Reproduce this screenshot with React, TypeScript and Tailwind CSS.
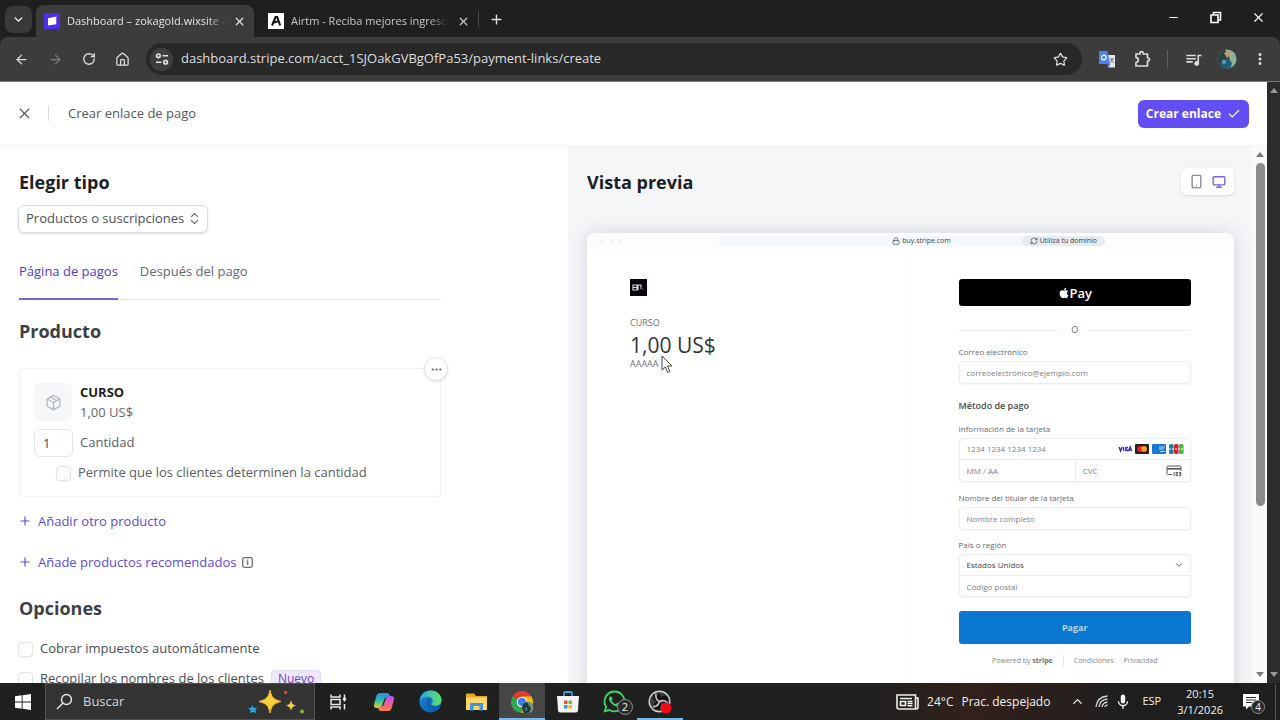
import React, { useState } from 'react';
import {
  ArrowLeft, ArrowRight, Check, ChevronDown, ChevronUp, ChevronsUpDown, House, Lock, Minus, Monitor,
  MoreHorizontal, Package, Plus, RefreshCw, RotateCw, Smartphone, Star, X,
} from 'lucide-react';
import { FaApple, FaWhatsapp } from 'react-icons/fa';
import { MdOutlineExtension, MdQueueMusic, MdMoreVert, MdMic } from 'react-icons/md';

/* ---------- Browser chrome ---------- */

interface TabProps {
  title: string;
  icon: React.ReactNode;
  active?: boolean;
}

const BrowserTab: React.FC<TabProps> = ({ title, icon, active }) => (
  <div className={`flex items-center h-8 w-[218px] pl-2 pr-2 rounded-t-lg ${active ? 'bg-[#3c3c3c] text-[#e3e3e3]' : 'text-[#c7c7c7]'}`}>
    {icon}
    <span className="ml-[7px] whitespace-nowrap text-[11px] leading-4 [mask-image:linear-gradient(to_right,black_88%,transparent)]">{title}</span>
    <button aria-label="Cerrar pestaña" className="ml-auto"><X size={13} strokeWidth={2.2} /></button>
  </div>
);

const StripeFavicon = () => (
  <svg width="16" height="16" viewBox="0 0 16 16">
    <rect width="16" height="16" rx="1" fill="#4f2fe8" />
    <path d="M4 5.2 12.3 3.6v7.6L4 12.6z" fill="#fff" />
  </svg>
);

const AirtmFavicon = () => (
  <svg width="16" height="16" viewBox="0 0 16 16">
    <rect width="16" height="16" fill="#fff" />
    <path d="M4 12.5 7.6 4h1.6l3 8.5M6 9.5l5-1.6" fill="none" stroke="#111" strokeWidth="2" />
  </svg>
);

const TuneIcon = () => (
  <svg width="14" height="14" viewBox="0 0 14 14" fill="none" stroke="#e3e3e3" strokeWidth="1.6">
    <circle cx="3.4" cy="3.8" r="1.8" />
    <path d="M7.5 3.8H13M1 10.2h5.5" />
    <circle cx="10.6" cy="10.2" r="1.8" />
  </svg>
);

const TranslateIcon = () => (
  <svg width="17" height="17" viewBox="0 0 17 17">
    <path d="M7 4h9v12.5H9z" fill="#e4e7ec" />
    <path d="M0 0h8.5L11 13H0z" fill="#4a80f0" />
    <path d="M8 13h3l-1.5 3.5z" fill="#2f5fd0" />
    <circle cx="4.8" cy="6.5" r="2.3" fill="none" stroke="#fff" strokeWidth="1.2" />
    <path d="M11 8h4M13 7v1c0 2-1 3-2 4m1-3 3 3" stroke="#6a7380" fill="none" />
  </svg>
);

const ExtensionsIcon = () => (
  <svg width="17" height="18" viewBox="0 0 17 18" fill="none" stroke="currentColor" strokeWidth="1.7">
    <path d="M2 4h4V3.300a1.600 1.600 0 0 1 3.200 0V4H13.500v4h.4a1.600 1.600 0 0 1 0 3.200h-.4V16H2v-3.600a2.400 2.400 0 0 0 0-4.800z" strokeLinejoin="round" />
  </svg>
);

const Avatar = () => (
  <svg width="20" height="20" viewBox="0 0 20 20">
    <defs><clipPath id="avatar"><circle cx="10" cy="10" r="9.6" /></clipPath></defs>
    <g clipPath="url(#avatar)">
      <rect width="20" height="20" fill="#8fb39a" />
      <path d="M0 3 7 0l4 5 2 6-3 9H0z" fill="#2b4240" />
      <path d="M7 4l4-2 3 3-4 4z" fill="#c39b6c" />
      <path d="M4 11l7-2 4 5-2 6H4z" fill="#1f6079" />
      <circle cx="7" cy="13" r="2" fill="#58a5b8" />
    </g>
  </svg>
);

const BrowserChrome = () => (
  <header className="shrink-0 bg-[#1f1f1f]">
    <div className="flex h-[37px] items-end pl-[5px]">
      <button aria-label="Buscar pestañas" className="mb-1 flex h-[27px] w-[27px] items-center justify-center rounded-lg bg-[#393939] text-white">
        <ChevronDown size={13} strokeWidth={2.6} />
      </button>
      <div className="ml-1 flex flex-1 items-end">
        <BrowserTab active title="Dashboard – zokagold.wixsite –" icon={<StripeFavicon />} />
        <div className="ml-1.5 flex items-center">
          <BrowserTab title="Airtm - Reciba mejores ingreso" icon={<AirtmFavicon />} />
        </div>
        <div className="mb-2.5 h-4 w-px bg-[#4a4a4a]" />
        <button aria-label="Nueva pestaña" className="mb-2.5 ml-2.5 text-[#dedede]"><Plus size={15} strokeWidth={2.2} /></button>
      </div>
      <div className="mb-3 flex items-center gap-[29px] pr-3.5 text-white">
        <button aria-label="Minimizar"><Minus size={13} /></button>
        <button aria-label="Restaurar">
          <svg width="13" height="13" viewBox="0 0 13 13" fill="none" stroke="currentColor" strokeWidth="1.6"><path d="M2 4h7v7.5H2zM4.500 3.500V1.500H11.500V9H9.500" /></svg>
        </button>
        <button aria-label="Cerrar"><X size={15} strokeWidth={1.8} /></button>
      </div>
    </div>
    <div className="flex h-[45px] items-center rounded-t-lg border-b border-[#777] bg-[#3c3c3c] pl-3.5 pr-[11px] text-[#dcdcdc]">
      <div className="flex items-center gap-[19px]">
        <button aria-label="Atrás"><ArrowLeft size={15} /></button>
        <button aria-label="Adelante" className="text-[#7c7c7c]"><ArrowRight size={15} /></button>
        <button aria-label="Recargar"><RotateCw size={14} strokeWidth={2.3} /></button>
        <button aria-label="Inicio"><House size={15} /></button>
      </div>
      <div className="ml-4 flex h-8 flex-1 items-center rounded-full bg-[#282828] pl-1 pr-3.5">
        <span className="flex h-[23px] w-[23px] items-center justify-center rounded-full bg-[#3f3f3f]"><TuneIcon /></span>
        <input
          aria-label="Barra de direcciones"
          className="ml-2 flex-1 bg-transparent text-[13px] text-[#dedede] outline-none"
          defaultValue="dashboard.stripe.com/acct_1SJOakGVBgOfPa53/payment-links/create"
        />
        <Star size={15} />
      </div>
      <div className="ml-[17px] flex items-center">
        <TranslateIcon />
        <span className="ml-[18px]"><ExtensionsIcon /></span>
        <span className="ml-4 h-[18px] w-px bg-[#5f5f5f]" />
        <MdQueueMusic size={19} className="ml-4" />
        <span className="ml-3.5"><Avatar /></span>
        <MdMoreVert size={18} className="ml-3.5" />
      </div>
    </div>
  </header>
);

/* ---------- Left panel ---------- */

const checkboxClass = 'h-[15px] w-[15px] shrink-0 appearance-none rounded-[4px] border border-[#e1e3e7] bg-white shadow-xs checked:bg-[#635bff]';
const linkClass = 'flex h-5 items-center gap-1.5 -ml-px text-[13px] font-medium leading-5 text-[#5f49db]';

const ProductCard = () => (
  <div className="relative mt-[25px] rounded-sm border border-[#f0f1f3] px-3.5 py-[13px]">
    <div className="flex h-10 items-center gap-2">
      <span className="flex h-[38px] w-[38px] items-center justify-center rounded-md bg-[#f5f7f9] text-[#b5b9c0]"><Package size={17} strokeWidth={1.8} /></span>
      <div className="text-[13px] leading-5">
        <p className="font-bold text-[#1c1e24]">CURSO</p>
        <p className="text-[#63676e]">1,00 US$</p>
      </div>
    </div>
    <div className="mt-[7px] flex items-center gap-[7px] text-[13px] text-[#5b5e64]">
      <input id="qty" defaultValue="1" className="h-7 w-[39px] rounded-md border border-[#e3e5e9] px-2 text-[13px] text-[#4a4d54]" />
      <label htmlFor="qty">Cantidad</label>
    </div>
    <label className="mt-1.5 flex h-5 items-center gap-[7px] pl-[22px] text-[13px] text-[#5b5e64]">
      <input type="checkbox" className={checkboxClass} />
      Permite que los clientes determinen la cantidad
    </label>
    <button aria-label="Más opciones" className="absolute -right-2 -top-3 flex h-6 w-6 items-center justify-center rounded-full border border-[#e2e4e8] bg-white text-[#555] shadow-sm">
      <MoreHorizontal size={13} />
    </button>
  </div>
);

const ConfigPanel = () => {
  const [tab, setTab] = useState(0);
  const tabs = ['Página de pagos', 'Después del pago'];

  return (
    <section className="min-w-0 overflow-hidden pl-[19px] pt-6">
      <div className="max-w-[422px]">
        <h2 className="text-[18px] font-bold leading-6 text-[#1c1e24]">Elegir tipo</h2>
        <div className="relative mt-[11px] -ml-px w-[190px]">
          <select aria-label="Elegir tipo" className="h-7 w-full appearance-none rounded-md border border-[#d9dce1] bg-white px-[7px] text-[13px] font-medium text-[#4e5157] shadow-sm">
            <option>Productos o suscripciones</option>
          </select>
          <ChevronsUpDown size={15} strokeWidth={1.8} className="pointer-events-none absolute right-1.5 top-1.5 text-[#6b6e75]" />
        </div>

        <div className="mt-7 flex gap-[22px] border-b border-[#dfe1e5] text-[13px] font-medium leading-5" role="tablist">
          {tabs.map((name, i) => (
            <button
              key={name}
              role="tab"
              aria-selected={tab === i}
              onClick={() => setTab(i)}
              className={`-mb-px border-b-2 pb-[17px] ${tab === i ? 'border-[#7467d8] text-[#4f39d3]' : 'border-transparent text-[#66696f]'}`}
            >
              {name}
            </button>
          ))}
        </div>

        <h2 className="mt-[19px] text-[18px] font-bold leading-6 text-[#3c3f46]">Producto</h2>
        <ProductCard />

        <button className={`mt-3.5 ${linkClass}`}><Plus size={14} />Añadir otro producto</button>
        <button className={`mt-[21px] ${linkClass}`}>
          <Plus size={14} />Añade productos recomendados
          <svg width="11" height="11" viewBox="0 0 11 11" fill="none" stroke="#6b6e75" strokeWidth="1.300"><rect x="0.700" y="0.700" width="9.600" height="9.600" rx="1.800" /><path d="M5.500 2.500v1.300M4.500 5h1.200v3" /></svg>
        </button>

        <h2 className="mt-6 text-[18px] font-bold leading-6 text-[#3c3f46]">Opciones</h2>
        <label className="mt-[19px] -ml-px flex h-5 items-center gap-[7px] text-[13px] font-medium text-[#4a4d54]">
          <input type="checkbox" className={checkboxClass} />
          Cobrar impuestos automáticamente
        </label>
        <label className="mt-2.5 -ml-px flex h-5 items-center gap-[7px] text-[13px] font-medium text-[#4a4d54]">
          <input type="checkbox" className={checkboxClass} />
          Recopilar los nombres de los clientes
          <span className="rounded-sm border border-[#e2d8f8] bg-[#efe8fc] px-1.5 text-[12px] leading-4 text-[#6b46b8]">Nuevo</span>
        </label>
      </div>
    </section>
  );
};

/* ---------- Preview ---------- */

const fieldClass = 'block w-full min-w-0 bg-transparent px-[7px] text-[8px] text-[#55585e] placeholder-[#7d8086] outline-none';
const boxClass = 'mt-1 rounded-sm border border-[#ebecef] bg-white shadow-xs';
const fieldLabel = 'block text-[8px] font-medium leading-[10px] text-[#66696f]';

const CardBrands = () => (
  <svg width="66" height="10" viewBox="0 0 66 10" className="mr-1.5 shrink-0">
    <g fill="none" stroke="#3a2fc4" strokeWidth="1.400">
      <path d="M1 3l1.500 4L4 3M5.500 3v4M10 3.500H8q-1 .8 0 1.500t1.500 1.500H7M10.500 7l1.700-4 1.500 4M11.300 6h2" />
    </g>
    <rect x="17" width="14" height="10" rx="1" fill="#251f20" />
    <circle cx="22" cy="5" r="3" fill="#eb1c26" /><circle cx="26" cy="5" r="3" fill="#f79e1b" />
    <rect x="34" width="14" height="10" rx="1" fill="#1878cf" />
    <path d="M41 3h6M41 5h5M42 7.500h5" stroke="#b9dcf7" strokeWidth="1.200" />
    <rect x="51" width="4.600" height="10" rx="1.500" fill="#1c7f9e" /><rect x="56" width="4.600" height="10" rx="1.500" fill="#d8222f" /><rect x="61" width="4.600" height="10" rx="1.500" fill="#4db83e" />
    <path d="M51 5h14" stroke="#fff" strokeWidth="1.200" strokeDasharray="2 1" />
  </svg>
);

const CvcIcon = () => (
  <svg width="16" height="12" viewBox="0 0 16 12" fill="none" stroke="#55585e" strokeWidth="1" className="mr-2 shrink-0">
    <path d="M6 9.500H2.200Q1 9.500 1 8.300V2.200Q1 1 2.200 1h11.600Q15 1 15 2.200V6" />
    <path d="M1 3.800h14" strokeWidth="1.600" />
    <path d="M8 7v4M9.500 7.500h2V9h-1.500v1.500h2M12.800 7.500h2v3.200h-2M13 9h1.500" />
  </svg>
);

const CheckoutForm = () => (
  <form className="w-1/2 border-l border-[#fafafa] pl-[47px] pr-[43px] pt-[30px]" onSubmit={(e) => e.preventDefault()}>
    <button aria-label="Apple Pay" className="flex h-[27px] w-full items-center justify-center rounded-[3px] bg-black text-[13px] font-semibold leading-4 text-white">
      <FaApple size={12} />Pay
    </button>
    <div className="mt-[18px] flex h-3 items-center gap-2.5 text-[9px] text-[#66696f]">
      <span className="h-px flex-1 bg-[#f0f1f3]" />O<span className="h-px flex-1 bg-[#f0f1f3]" />
    </div>

    <label htmlFor="email" className={`mt-[11px] ${fieldLabel}`}>Correo electrónico</label>
    <div className={boxClass}><input id="email" placeholder="correoelectrónico@ejemplo.com" className={`h-[21px] ${fieldClass}`} /></div>

    <h3 className="mt-4 text-[9px] font-semibold leading-3 text-[#45484e]">Método de pago</h3>
    <label htmlFor="card" className={`mt-3 ${fieldLabel}`}>Información de la tarjeta</label>
    <div className={boxClass}>
      <div className="flex h-[21px] items-center border-b border-[#ebecef]">
        <input id="card" placeholder="1234 1234 1234 1234" className={fieldClass} />
        <CardBrands />
      </div>
      <div className="flex h-[21px] items-center">
        <input aria-label="Caducidad" placeholder="MM / AA" className={`flex-1 ${fieldClass}`} />
        <div className="flex h-full w-1/2 shrink-0 items-center border-l border-[#ebecef]">
          <input aria-label="CVC" placeholder="CVC" className={fieldClass} />
          <CvcIcon />
        </div>
      </div>
    </div>

    <label htmlFor="holder" className={`mt-[11px] ${fieldLabel}`}>Nombre del titular de la tarjeta</label>
    <div className={boxClass}><input id="holder" placeholder="Nombre completo" className={`h-[21px] ${fieldClass}`} /></div>

    <label htmlFor="country" className={`mt-2.5 ${fieldLabel}`}>País o región</label>
    <div className={boxClass}>
      <div className="flex h-[21px] items-center border-b border-[#ebecef]">
        <select id="country" className="w-full appearance-none bg-transparent px-[7px] text-[8px] text-[#3f4248] outline-none">
          <option>Estados Unidos</option>
        </select>
        <ChevronDown size={10} className="mr-1.5 shrink-0 text-[#333]" />
      </div>
      <input aria-label="Código postal" placeholder="Código postal" className={`h-5 ${fieldClass}`} />
    </div>

    <button className="mt-3.5 h-[33px] w-full rounded-[3px] bg-[#0a78d0] text-[9px] font-bold text-[#b5d7f2]">Pagar</button>

    <div className="mt-[11px] flex items-center justify-center text-[7px] leading-[10px] text-[#85888e]">
      <span>Powered by <b className="text-[#6c6f75]">stripe</b></span>
      <span className="mx-2.5 h-3 w-px bg-[#e8e9ec]" />
      <a href="#condiciones">Condiciones</a>
      <a href="#privacidad" className="ml-2.5">Privacidad</a>
    </div>
  </form>
);

const Cursor = () => (
  <svg width="12" height="19" viewBox="0 0 12 19" className="absolute left-[31px] top-[-4px]">
    <path d="M1 1v14l3.300-3 2.300 5.500 2.200-1L6.600 11H11z" fill="#fff" stroke="#444" strokeWidth="1" />
  </svg>
);

const PreviewPanel = () => (
  <section className="min-w-0 overflow-hidden bg-[#f5f6f8] px-[19px]">
    <div className="flex items-center justify-between pt-[22px]">
      <h2 className="text-[18px] font-bold leading-6 text-[#1c1e24]">Vista previa</h2>
      <div className="flex h-[27px] items-center gap-1.5 rounded-md bg-white px-2 shadow">
        <button aria-label="Móvil" className="text-[#6f7278]"><Smartphone size={15} strokeWidth={1.8} /></button>
        <button aria-label="Escritorio" className="ml-0.5 text-[#7564e4]"><Monitor size={14} strokeWidth={2.4} /></button>
      </div>
    </div>

    <div className="mt-[38px] h-full rounded-t-lg bg-white shadow-[0_0_18px_rgba(60,66,87,0.18)]">
      <div className="flex h-4 items-center rounded-t-lg bg-[#fbfdfe] pl-3 text-[7px] font-medium leading-[10px] text-[#3b4252]">
        <div className="flex w-[119px] gap-1.5">
          <span className="h-1 w-1 rounded-full bg-[#f1f3f5]" />
          <span className="h-1 w-1 rounded-full bg-[#f1f3f5]" />
          <span className="h-1 w-1 rounded-full bg-[#f1f3f5]" />
        </div>
        <div className="mr-[129px] flex h-2.5 flex-1 items-center rounded-full bg-[#f5f8fa]">
          <span className="flex-1" />
          <span className="flex items-center gap-0.5 whitespace-nowrap pl-5"><Lock size={8} className="shrink-0" />buy.stripe.com</span>
          <span className="flex flex-1 justify-end">
            <a href="#dominio" className="flex h-2.5 items-center gap-0.5 rounded-full bg-[#e8ecef] px-2"><RefreshCw size={8} />Utiliza tu dominio</a>
          </span>
        </div>
      </div>
      <div className="flex h-full">
        <div className="w-1/2 pl-[43px] pt-[30px]">
          <svg width="17" height="17" viewBox="0 0 17 17">
            <rect width="17" height="17" fill="#050308" />
            <path d="M3 6h4v5H3zM3.500 8.500h3M8 11V6h3v4" fill="none" stroke="#d8d5dc" strokeWidth="1.200" />
            <path d="M12 7v4l2-1" fill="none" stroke="#6a1d92" />
          </svg>
          <p className="mt-[21px] text-[9px] leading-3 text-[#6f7278]">CURSO</p>
          <p className="mt-0.5 text-[21px] leading-7 text-[#33353a]">1,00 US$</p>
          <p className="relative text-[9px] leading-[10px] text-[#6f7278]">AAAAA<Cursor /></p>
        </div>
        <CheckoutForm />
      </div>
    </div>
  </section>
);

/* ---------- Scrollbars ---------- */

const Arrow = ({ down, color }: { down?: boolean; color: string }) => (
  <svg width="8" height="5" viewBox="0 0 8 5"><path d={down ? 'M0 0h8L4 5z' : 'M0 5h8L4 0z'} fill={color} /></svg>
);

const PanelScrollbar = () => (
  <div className="flex flex-col items-center bg-[#fafafa] pb-1.5 pt-1.5">
    <Arrow color="#7a7a7a" />
    <div className="mb-1 mt-1.5 flex w-full flex-1 flex-col items-center">
      <div className="h-[68%] w-[9px] rounded-full bg-[#8b8b8b]" />
    </div>
    <Arrow down color="#7a7a7a" />
  </div>
);

/* ---------- Windows taskbar ---------- */

const WindowsLogo = () => (
  <svg width="16" height="16" viewBox="0 0 16 16" fill="#fff">
    <path d="M0 2.300 6.700 1.300v6.300H0zM7.600 1.200 16 0v7.600H7.600zM0 8.400h6.700v6.300L0 13.700zM7.600 8.400H16V16l-8.400-1.200z" />
  </svg>
);

const Sparkles = () => (
  <svg width="58" height="28" viewBox="0 0 58 28">
    <path d="M23 2c2 8 3 9 11 11.500C26 16 25 17 23 25c-2-8-3-9-11-11.500C20 11 21 10 23 2z" fill="#fbd03a" stroke="#f2b31e" strokeWidth="1" />
    <path d="M44 12c1 4 1.500 4.500 5.500 5.500-4 1-4.500 1.500-5.500 5.500-1-4-1.500-4.500-5.500-5.500 4-1 4.500-1.500 5.500-5.500z" fill="#f9cf45" />
    <path d="M5 17.500 7 20l3-.5-1.500 2.500L9 25l-3-1-3 1 .5-3L1 20h3z" fill="#2fa7e0" />
    <circle cx="38.500" cy="4.500" r="1.800" fill="#d9482f" /><circle cx="55" cy="23.500" r="2" fill="#7fb344" />
  </svg>
);

const TaskView = () => (
  <svg width="17" height="16" viewBox="0 0 17 16" fill="none" stroke="#e8e8e8" strokeWidth="1.500">
    <path d="M1 .5v2.500h9V.5M1 5.500h9v5H1zM1 15.500V13h9v2.500M14.500.5v7M14.500 10v5.500" />
    <circle cx="14.500" cy="5" r="1" fill="#e8e8e8" />
  </svg>
);

const Copilot = () => (
  <svg width="22" height="20" viewBox="0 0 22 20">
    <defs>
      <linearGradient id="cp1" x2="0" y2="1"><stop stopColor="#1f8fe8" /><stop offset=".55" stopColor="#38c1a0" /><stop offset="1" stopColor="#f1c62f" /></linearGradient>
      <linearGradient id="cp2" x2="0" y2="1"><stop stopColor="#a35cf0" /><stop offset=".5" stopColor="#ee5a9a" /><stop offset="1" stopColor="#f8883c" /></linearGradient>
    </defs>
    <path d="M6.500 1H14q2 0 2.600 2l.6 2H14q-2 0-2.600 2L9 14q-.7 2-2.500 2H3.500Q.3 16 1 12.500L3.500 3.500Q4.300 1 6.500 1z" fill="url(#cp1)" />
    <path d="M15.500 19H8q-2 0-2.600-2l-.6-2H8q2 0 2.600-2L13 6q.7-2 2.500-2h3q3.200 0 2.500 3.500l-2.500 9Q17.700 19 15.500 19z" fill="url(#cp2)" />
  </svg>
);

const EdgeIcon = () => (
  <svg width="23" height="23" viewBox="0 0 23 23">
    <defs>
      <linearGradient id="eg1"><stop stopColor="#2aa8e0" /><stop offset="1" stopColor="#5ee06a" /></linearGradient>
      <linearGradient id="eg2" x2="1" y2="1"><stop stopColor="#1c8fdc" /><stop offset="1" stopColor="#0c4f9c" /></linearGradient>
    </defs>
    <circle cx="11.500" cy="11.500" r="11" fill="url(#eg2)" />
    <path d="M.6 10.500C1.500 4 6.500.5 11.500.5c7 0 11 5 11 9.500 0 4-3 5.800-6 5.800-2.500 0-4-1-4-1.800 0-.8 1.300-1 1.300-3 0-2.200-2.200-4.200-5.500-4.200-3.500 0-6.300 1.700-7.700 3.700z" fill="url(#eg1)" />
    <path d="M8 9c-2 4 .5 10.500 7 11.500 2.500.3 5-1.500 6-3.200-4 1.700-9.500 1-10.500-3.300C10 11.500 11.500 10 12.500 9.500 11 8 9 8 8 9z" fill="#1460ad" />
  </svg>
);

const ExplorerIcon = () => (
  <svg width="21" height="18" viewBox="0 0 21 18">
    <path d="M0 1.500Q0 .5 1 .5h7l2 2.500h11v14H0z" fill="#e9a825" />
    <path d="M0 4.500h21V17H0z" fill="#fbd768" />
    <path d="M4 10h13v7.500h-3.500V13h-6v4.500H4z" fill="#4096d8" />
  </svg>
);

const ChromeIcon = () => (
  <svg width="24" height="24" viewBox="0 0 24 24">
    <path d="M12 12 2.500 6.500A11 11 0 0 1 21.500 6.500z" fill="#e33b2e" />
    <path d="M12 12 21.500 6.500A11 11 0 0 1 12 23z" fill="#fbc116" />
    <path d="M12 12v11A11 11 0 0 1 2.500 6.500z" fill="#2da94f" />
    <path d="M12 6.500h9.500L17 14z" fill="#fbc116" /><path d="M2.500 6.500 7.200 14.800 12 12z" fill="#2da94f" />
    <circle cx="12" cy="12" r="5.300" fill="#fff" /><circle cx="12" cy="12" r="4.200" fill="#3d7df0" />
    <circle cx="17.500" cy="17.500" r="6" fill="#6f8f80" />
    <path d="M13 14l4-2 2 4 2 2-2 5h-5l-2-4z" fill="#22363a" /><circle cx="16" cy="19" r="1.800" fill="#2d7188" />
  </svg>
);

const StoreIcon = () => (
  <svg width="22" height="22" viewBox="0 0 22 22">
    <path d="M7 6V2.500q0-1.500 1.500-1.500h5Q15 1 15 2.500V6" fill="none" stroke="#3aa0e0" strokeWidth="1.800" />
    <path d="M0 5h22l-1 14.500q-.2 2-2 2H3q-1.800 0-2-2z" fill="#f3f3f3" />
    <path d="M7 9.500h3.500V13H7z" fill="#e8502f" /><path d="M11.500 9.500H15V13h-3.500z" fill="#7cb83a" />
    <path d="M7 14h3.500v3.500H7z" fill="#2a9fe0" /><path d="M11.500 14H15v3.500h-3.500z" fill="#f4b71f" />
  </svg>
);

const ObsIcon = () => (
  <svg width="24" height="24" viewBox="0 0 24 24">
    <circle cx="11.500" cy="11.500" r="10.300" fill="#3a3a3c" stroke="#cfcfcf" strokeWidth="1.400" />
    <circle cx="9" cy="7.500" r="4" fill="#141416" /><circle cx="16.500" cy="9.500" r="3.800" fill="#141416" /><circle cx="9.500" cy="16" r="4" fill="#141416" />
    <path d="M8 3.500q-1 6 3.500 8M19.500 13q-3-4-8-1.500M5 16.500q5 .5 6.500-5" fill="none" stroke="#c4c4c4" strokeWidth="1.700" />
    <circle cx="18" cy="18" r="5.600" fill="#f00c14" />
  </svg>
);

const NewsIcon = () => (
  <svg width="23" height="16" viewBox="0 0 23 16" fill="none" stroke="#f0f0f0" strokeWidth="1.600">
    <path d="M1 1h18.500v12.500q0 1.500 1.200 1.500H3q-2 0-2-2zM19.500 4H22v9.500q0 1.500-1.500 1.500M4 4.500h12M4.500 7.500h5v4h-5zM11.500 7.500h5M11.500 9.500h5M11.500 11.700h5" />
  </svg>
);

const WifiIcon = () => (
  <svg width="13" height="13" viewBox="0 0 13 13" fill="none" stroke="#d6d6d6" strokeWidth="1.300">
    <path d="M1 12Q2 2 12.500 1M4 12q.5-7 8.500-8M7 12q.5-4 5.500-5M9.800 12q.2-1.500 2.700-2" />
  </svg>
);

const NotificationIcon = () => (
  <svg width="16" height="16" viewBox="0 0 16 16"><path d="M0 0h16v12.500H6L3 15.500v-3H0z" fill="#fff" /><path d="M3 3.500h10M3 6h10M3 8.500h6" stroke="#333" /></svg>
);

const apps = [
  { name: 'Vista de tareas', icon: <TaskView /> },
  { name: 'Copilot', icon: <Copilot /> },
  { name: 'Edge', icon: <EdgeIcon /> },
  { name: 'Explorador', icon: <ExplorerIcon /> },
  { name: 'Chrome', icon: <ChromeIcon />, focused: true, open: true },
  { name: 'Store', icon: <StoreIcon /> },
  { name: 'WhatsApp', icon: <FaWhatsapp size={25} color="#3ed465" />, badge: '2' },
  { name: 'OBS', icon: <ObsIcon />, open: true },
];

const Taskbar = () => (
  <footer className="flex h-[37px] shrink-0 items-stretch bg-linear-to-r from-[#1f2020] from-68% via-[#33201a] via-76% to-[#1e1e1e] to-88% text-[12px] text-[#f2f2f2]">
    <button aria-label="Inicio" className="flex w-[45px] items-center justify-center"><WindowsLogo /></button>
    <label className="flex w-[270px] items-center border border-[#505050] bg-[#333] pl-2.5">
      <svg width="17" height="17" viewBox="0 0 17 17" fill="none" stroke="#e8e8e8" strokeWidth="1.400"><circle cx="10.500" cy="6.500" r="5" /><path d="M7 10 1 16" /></svg>
      <input placeholder="Buscar" className="ml-2.5 w-[164px] bg-transparent text-[13px] placeholder-[#d6d6d6] outline-none" />
      <Sparkles />
    </label>
    {apps.map((app) => (
      <button
        key={app.name}
        aria-label={app.name}
        className={`relative flex w-[46px] items-center justify-center border-b-2 pt-0.5 ${app.focused ? 'bg-[#464646]' : ''} ${app.open ? 'border-[#76b9ed]' : 'border-transparent'}`}
      >
        {app.icon}
        {app.badge && <span className="absolute right-1 top-4 flex h-4 w-4 items-center justify-center rounded-full border border-[#8a8a8a] bg-[#2b2b2b] text-[11px] leading-3">{app.badge}</span>}
      </button>
    ))}
    <div className="ml-auto flex items-center pr-1">
      <NewsIcon />
      <span className="ml-2">24°C</span>
      <span className="ml-2">Prac. despejado</span>
      <ChevronUp size={15} className="ml-5" />
      <span className="ml-2.5"><WifiIcon /></span>
      <MdMic size={18} className="ml-1.5" />
      <span className="ml-2.5 text-[11px]">ESP</span>
      <div className="ml-4 text-center text-[11px] leading-4"><p>20:15</p><p>3/1/2026</p></div>
      <div className="relative ml-5 mr-4">
        <NotificationIcon />
        <span className="absolute left-2 top-1.5 flex h-3.5 w-3.5 items-center justify-center rounded-full border border-[#8a8a8a] bg-[#2b2b2b] text-[10px] leading-3">4</span>
      </div>
      <span className="h-9 w-px bg-[#555]" />
    </div>
  </footer>
);

export default function App() {
  return (
    <div className="flex h-screen flex-col overflow-hidden bg-white font-['Open_Sans','Noto_Sans',sans-serif]">
      <BrowserChrome />
      <div className="flex min-h-0 flex-1">
        <main className="flex min-w-0 flex-1 flex-col">
          <div className="flex h-16 shrink-0 items-center border-b border-[#f3f4f5] pl-4 pr-[18px]">
            <button aria-label="Cerrar" className="text-[#55585e]"><X size={17} strokeWidth={1.8} /></button>
            <span className="ml-[15px] h-[15px] w-px bg-[#d9dbdf]" />
            <h1 className="ml-[19px] text-[13px] font-medium text-[#55585e]">Crear enlace de pago</h1>
            <button className="ml-auto flex h-7 items-center gap-1.5 rounded-md bg-[#634df5] px-2 text-[12px] font-bold text-white">
              Crear enlace<Check size={14} />
            </button>
          </div>
          <div className="grid min-h-0 flex-1 grid-cols-[568fr_685fr_14px]">
            <ConfigPanel />
            <PreviewPanel />
            <PanelScrollbar />
          </div>
        </main>
        <div className="flex w-[13px] flex-col items-center justify-between bg-[#2c2c2c] py-1.5">
          <Arrow color="#9a9a9a" />
          <Arrow down color="#9a9a9a" />
        </div>
      </div>
      <Taskbar />
    </div>
  );
}
